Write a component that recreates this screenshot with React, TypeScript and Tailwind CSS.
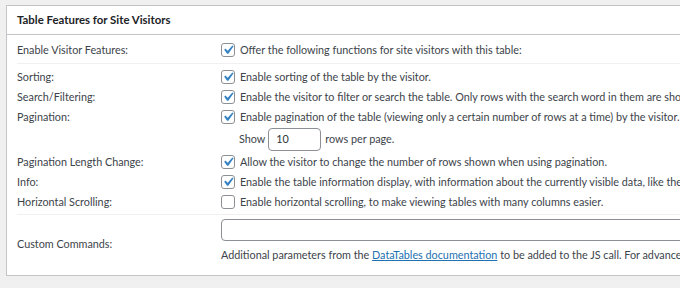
import React from "react";

const Check = ({ checked }: { checked: boolean }) => (
  <span className="relative inline-block w-[14px] h-[14px] shrink-0 rounded-[3px] border border-[#8c8f94] bg-white">
    {checked && (
      <svg viewBox="0 0 20 20" className="absolute left-[-3px] top-[-3px] w-[18px] h-[18px]">
        <path d="M14.83 4.89l1.34.94-5.81 8.38H9.02L5.78 9.67l1.34-1.25 2.57 2.4z" fill="#3582c4" />
      </svg>
    )}
  </span>
);

const CheckLine = ({ checked, text }: { checked: boolean; text: string }) => (
  <div className="flex items-center gap-[5px] h-[20px] whitespace-nowrap">
    <Check checked={checked} />
    <span>{text}</span>
  </div>
);

const Row = ({ label, children }: { label: string; children: React.ReactNode }) => (
  <div className="flex">
    <div className="w-[204px] shrink-0 h-[20px] flex items-center">{label}</div>
    <div className="flex-1 min-w-0">{children}</div>
  </div>
);

export default function App() {
  return (
    <div
      className="w-[680px] h-[288px] overflow-hidden bg-[#f0f0f1] pt-[5px] pl-[6px] text-[#3c434a] text-[10.8px]"
      style={{ fontFamily: 'Lato, "Noto Sans", sans-serif' }}
    >
      <div className="w-[760px] h-[271px] bg-white border border-[#c3c4c7]">
        <div className="h-[29px] border-b border-[#c3c4c7] flex items-center px-[10px]">
          <h2 className="text-[11.4px] font-bold text-[#1d2327]">Table Features for Site Visitors</h2>
        </div>
        <div className="px-[10px]">
          <div className="flex h-[29px] pt-[2px] items-center border-b border-[#f0f0f1]">
            <div className="w-[204px] shrink-0">Enable Visitor Features:</div>
            <CheckLine checked text="Offer the following functions for site visitors with this table:" />
          </div>
          <div className="pt-[3px] pb-[2px] border-b border-[#f0f0f1]">
            <Row label="Sorting:">
              <CheckLine checked text="Enable sorting of the table by the visitor." />
            </Row>
            <Row label="Search/Filtering:">
              <CheckLine checked text="Enable the visitor to filter or search the table. Only rows with the search word in them are shown." />
            </Row>
            <Row label="Pagination:">
              <CheckLine checked text="Enable pagination of the table (viewing only a certain number of rows at a time) by the visitor." />
              <div className="flex items-center gap-[3px] h-[25px] pl-[18px]">
                <span>Show</span>
                <div className="w-[53px] h-[23px] border border-[#8c8f94] rounded-[4px] flex items-center px-[7px] text-[#2c3338]">10</div>
                <span className="ml-[1px]">rows per page.</span>
              </div>
            </Row>
            <Row label="Pagination Length Change:">
              <CheckLine checked text="Allow the visitor to change the number of rows shown when using pagination." />
            </Row>
            <Row label="Info:">
              <CheckLine checked text="Enable the table information display, with information about the currently visible data, like the number of rows." />
            </Row>
            <Row label="Horizontal Scrolling:">
              <CheckLine checked={false} text="Enable horizontal scrolling, to make viewing tables with many columns easier." />
            </Row>
          </div>
          <div className="flex pt-[4px]">
            <div className="w-[204px] shrink-0 flex items-center">Custom Commands:</div>
            <div className="flex-1 min-w-0">
              <div className="h-[22px] border border-[#8c8f94] rounded-[4px] bg-white" />
              <div className="h-[28px] flex items-center whitespace-nowrap">
                <span>
                  Additional parameters from the{" "}
                  <a className="text-[#2271b1] underline">DataTables documentation</a> to be added to the JS call. For advanced use only.
                </span>
              </div>
            </div>
          </div>
        </div>
      </div>
    </div>
  );
}
